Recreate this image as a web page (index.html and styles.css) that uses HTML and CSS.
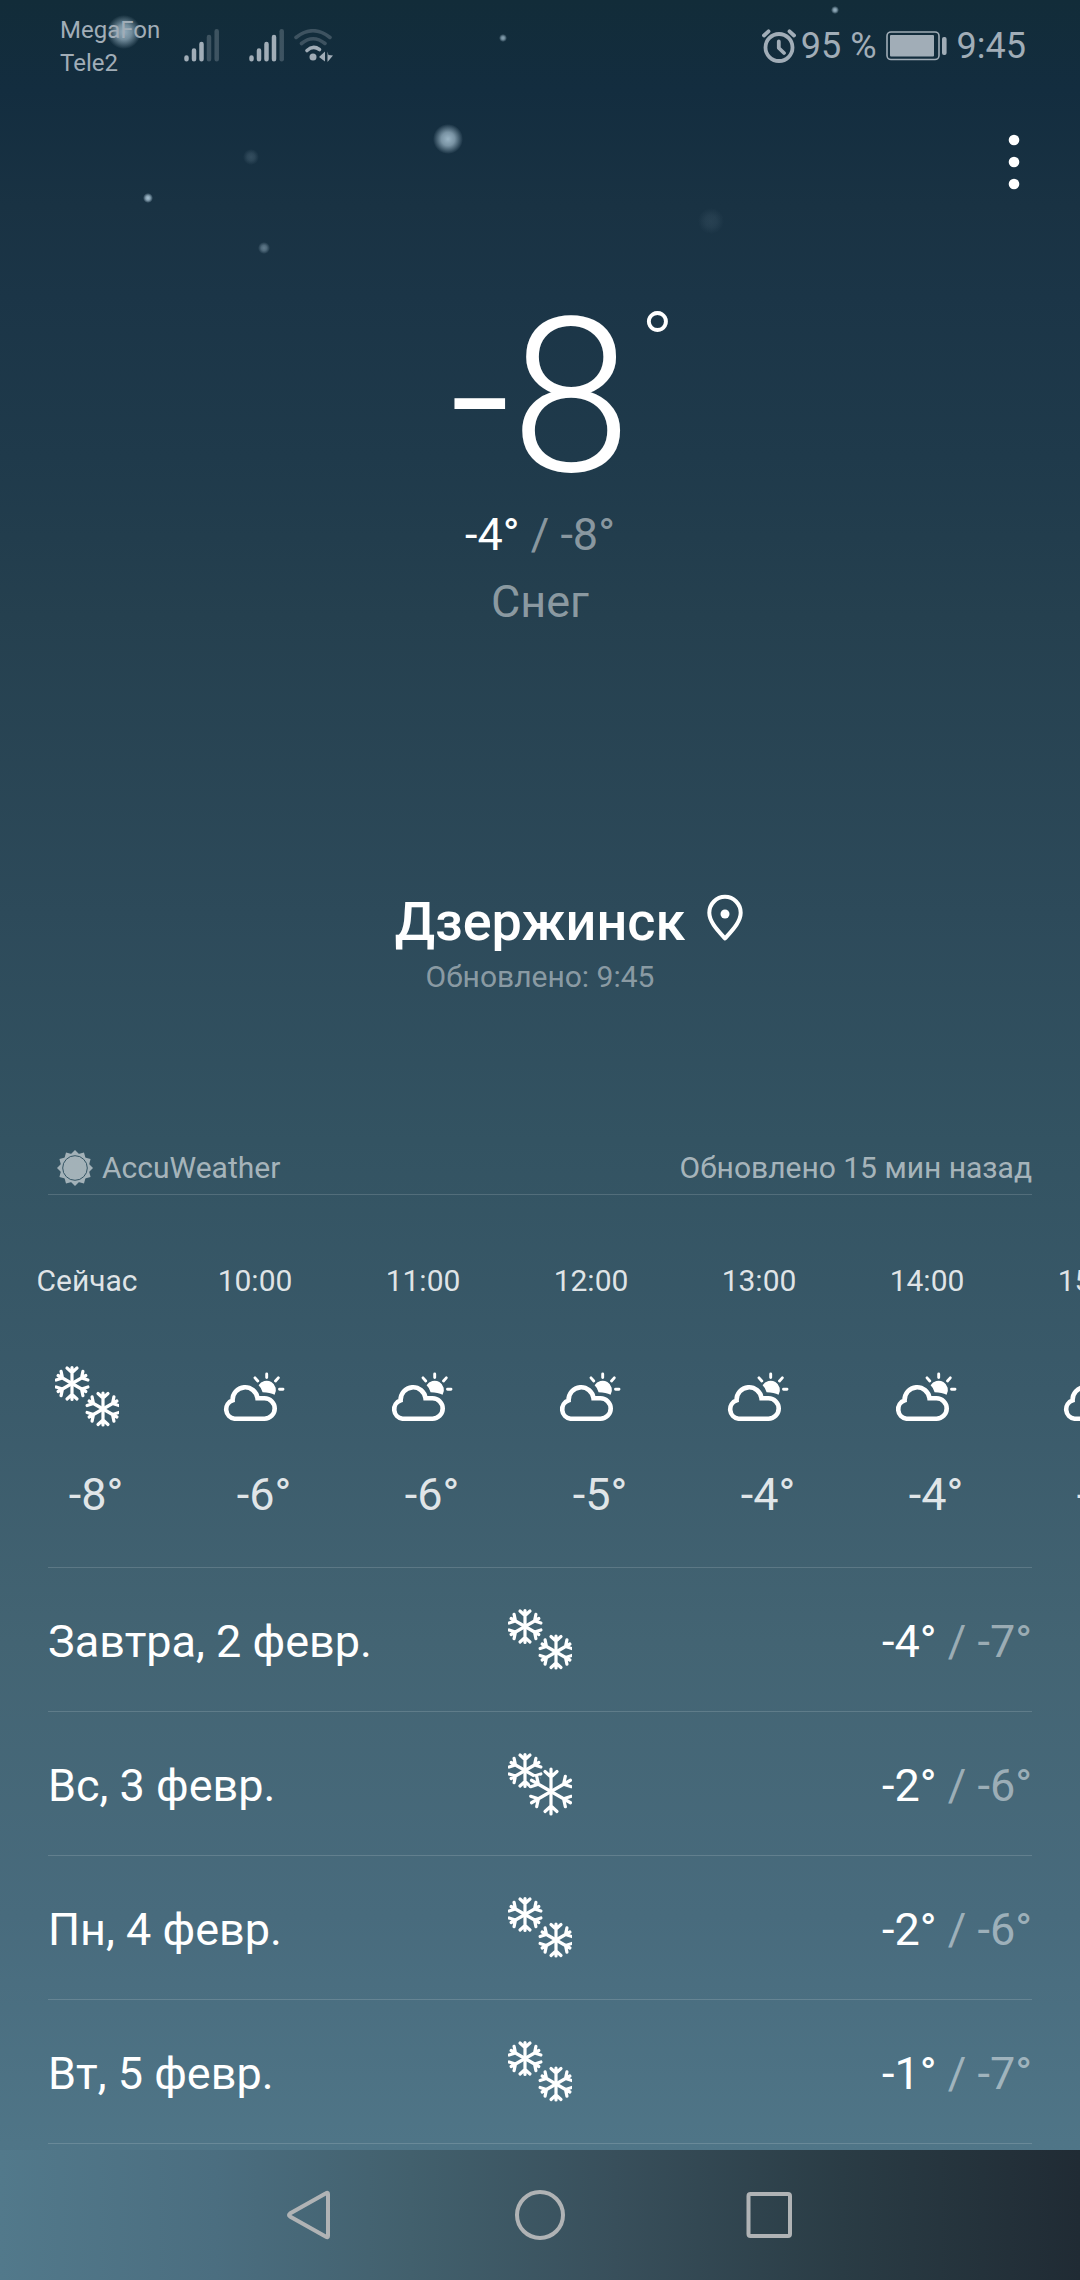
FILE: index.html
```html
<!DOCTYPE html>
<html lang="ru">
<head>
<meta charset="utf-8">
<meta name="viewport" content="width=device-width, initial-scale=1">
<title>Погода</title>
<link rel="stylesheet" href="styles.css">
</head>
<body>
<svg class="defs" width="0" height="0" aria-hidden="true">
  <defs>
    <radialGradient id="glow">
      <stop offset="0" stop-color="#a9c3d3"/>
      <stop offset="0.45" stop-color="#a9c3d3" stop-opacity="0.75"/>
      <stop offset="1" stop-color="#a9c3d3" stop-opacity="0"/>
    </radialGradient>
    <g id="arm"><path d="M0 0V-16M-5 -15.500L0 -11L5 -15.500"/></g>
    <g id="flake">
      <use href="#arm"/><use href="#arm" transform="rotate(60)"/><use href="#arm" transform="rotate(120)"/>
      <use href="#arm" transform="rotate(180)"/><use href="#arm" transform="rotate(240)"/><use href="#arm" transform="rotate(300)"/>
    </g>
    <g id="arm-big"><path d="M0 0V-22.500M-6 -20L0 -14.500L6 -20"/></g>
    <g id="flake-big">
      <use href="#arm-big"/><use href="#arm-big" transform="rotate(60)"/><use href="#arm-big" transform="rotate(120)"/>
      <use href="#arm-big" transform="rotate(180)"/><use href="#arm-big" transform="rotate(240)"/><use href="#arm-big" transform="rotate(300)"/>
    </g>
    <mask id="behind" maskUnits="userSpaceOnUse" x="0" y="0" width="64" height="64">
      <rect width="64" height="64" fill="#fff"/>
      <use href="#flake-big" transform="translate(43 39.500)" stroke="#000" stroke-width="7"/>
    </mask>
    <symbol id="snow" viewBox="0 0 64 64">
      <g fill="none" stroke="#fff" stroke-width="3.200" stroke-linecap="round">
        <use href="#flake" transform="translate(17 18.500)"/>
        <use href="#flake" transform="translate(48 44)"/>
      </g>
    </symbol>
    <symbol id="heavy-snow" viewBox="0 0 64 64">
      <g fill="none" stroke-linecap="round">
        <g mask="url(#behind)"><use href="#flake" transform="translate(17 18.500)" stroke="#fff" stroke-width="3.200"/></g>
        <use href="#flake-big" transform="translate(43 39.500)" stroke="#fff" stroke-width="3.200"/>
      </g>
    </symbol>
    <symbol id="partly" viewBox="0 0 64 64">
      <path d="M11.500 53.700H41.500A10.200 10.200 0 0 0 41.500 33.300H34.500A12.500 12.500 0 0 0 9.600 35.300A9.500 9.500 0 0 0 11.500 53.700Z" fill="none" stroke="#fff" stroke-width="4.600"/>
      <path d="M35.600 20.200A9 9 0 1 1 51.600 29.800Q47 27.500 39.600 27.200Q38.600 23 35.600 20.200Z" fill="#fff"/>
      <path d="M43.700 9V12.500M56.500 24.300H60M52.500 16L55.300 12.900M34.800 16L32 12.900" fill="none" stroke="#fff" stroke-width="2.900" stroke-linecap="round"/>
    </symbol>
  </defs>
</svg>

<svg class="snowfall" aria-hidden="true">
  <g fill="url(#glow)">
    <circle cx="124" cy="32" r="17" opacity="0.85"/>
    <circle cx="448" cy="139" r="15" opacity="0.9"/>
    <circle cx="251" cy="157" r="8" opacity="0.2"/>
    <circle cx="148" cy="198" r="5"/>
    <circle cx="264" cy="248" r="6" opacity="0.5"/>
    <circle cx="503" cy="38" r="4" opacity="0.8"/>
    <circle cx="835" cy="10" r="4" opacity="0.9"/>
    <circle cx="711" cy="221" r="13" opacity="0.1"/>
  </g>
</svg>

<header class="status">
  <div class="carriers"><span>MegaFon</span><span>Tele2</span></div>
  <svg class="signal" width="36" height="34" viewBox="0 0 36 34" aria-hidden="true">
    <g stroke="currentColor" stroke-width="4.500" stroke-linecap="round">
      <path d="M2.500 28.500V30.200M10 21.500V30.200M17.500 15V30.200"/>
      <path d="M25 8V30.200M32.700 2.300V30.200" opacity="0.3"/>
    </g>
  </svg>
  <svg class="signal signal-second" width="36" height="34" viewBox="0 0 36 34" aria-hidden="true">
    <g stroke="currentColor" stroke-width="4.500" stroke-linecap="round">
      <path d="M2.500 28.500V30.200M10 21.500V30.200M17.500 15V30.200M25 8V30.200"/>
      <path d="M32.700 2.300V30.200" opacity="0.3"/>
    </g>
  </svg>
  <svg class="wifi" width="40" height="34" viewBox="0 0 40 34" aria-hidden="true">
    <g fill="none" stroke="currentColor" stroke-width="3.600" stroke-linecap="round">
      <path d="M2 8.500Q19 -5 36 8.500M7.500 14.500Q19 5 31 14.500" opacity="0.3"/>
      <path d="M13 21.500Q19 16 25.500 20.500"/>
    </g>
    <circle cx="19" cy="28" r="3.500" fill="currentColor"/>
    <path d="M31 22.500V32.500L25 28ZM33.500 22.500L34.500 26L39 26.500L33.500 33Z" fill="currentColor"/>
  </svg>
  <div class="spacer"></div>
  <svg class="alarm" width="34" height="34" viewBox="0 0 34 34" aria-hidden="true">
    <g fill="none" stroke="currentColor" stroke-width="3.800" stroke-linecap="round" stroke-linejoin="round">
      <circle cx="17" cy="18.500" r="13.500"/>
      <path d="M16.800 12.500V19L22 24M2 6.500L6.500 2.300M32 6.500L27.500 2.300"/>
    </g>
  </svg>
  <span class="battery-level">95 %</span>
  <svg class="battery" width="62" height="30" viewBox="0 0 62 30" aria-hidden="true">
    <rect x="1" y="1" width="52" height="27.500" rx="4" fill="none" stroke="currentColor" stroke-width="1.600"/>
    <rect x="4" y="4" width="44" height="21.500" rx="1" fill="currentColor"/>
    <rect x="56" y="6" width="4.600" height="18" rx="2" fill="currentColor"/>
  </svg>
  <time class="clock">9:45</time>
</header>

<main class="weather">
  <div class="toolbar">
    <button class="more" type="button" aria-label="Ещё">
      <svg width="12" height="56" viewBox="0 0 12 56"><g fill="#fff"><circle cx="6" cy="6" r="5.300"/><circle cx="6" cy="28" r="5.300"/><circle cx="6" cy="50" r="5.300"/></g></svg>
    </button>
  </div>

  <section class="current">
    <div class="side-mark now"><span class="now-value">-8</span><span class="now-degree">°</span></div>
    <p class="range">-4°<span class="low"> / -8°</span></p>
    <p class="condition">Снег</p>
  </section>

  <section class="place">
    <div class="side-mark">
      <h1 class="city">Дзержинск</h1>
      <svg class="pin" width="38" height="48" viewBox="0 0 38 48" aria-hidden="true">
        <path d="M19 44.500C12 36.500 3.300 28 3.300 18.800A15.700 16 0 0 1 34.700 18.800C34.700 28 26 36.500 19 44.500Z" fill="none" stroke="#fff" stroke-width="4" stroke-linejoin="round"/>
        <circle cx="19" cy="20" r="4.500" fill="#fff"/>
      </svg>
    </div>
    <p class="updated">Обновлено: 9:45</p>
  </section>

  <div class="source">
    <a class="provider" href="#">
      <svg width="36" height="36" viewBox="-18 -18 36 36" aria-hidden="true">
        <defs><mask id="ring"><rect x="-18" y="-18" width="36" height="36" fill="#fff"/><circle r="12.300" fill="none" stroke="#000"/></mask></defs>
        <g class="sun" mask="url(#ring)">
          <path d="M0 -18L18 0L0 18L-18 0Z"/>
          <path d="M0 -18L18 0L0 18L-18 0Z" transform="rotate(30)"/>
          <path d="M0 -18L18 0L0 18L-18 0Z" transform="rotate(60)"/>
        </g>
      </svg>
      AccuWeather
    </a>
    <span>Обновлено 15 мин назад</span>
  </div>

  <ol class="hours">
    <li><span>Сейчас</span><svg class="icon"><use href="#snow"/></svg><span class="deg">-8°</span></li>
    <li><span>10:00</span><svg class="icon"><use href="#partly"/></svg><span class="deg">-6°</span></li>
    <li><span>11:00</span><svg class="icon"><use href="#partly"/></svg><span class="deg">-6°</span></li>
    <li><span>12:00</span><svg class="icon"><use href="#partly"/></svg><span class="deg">-5°</span></li>
    <li><span>13:00</span><svg class="icon"><use href="#partly"/></svg><span class="deg">-4°</span></li>
    <li><span>14:00</span><svg class="icon"><use href="#partly"/></svg><span class="deg">-4°</span></li>
    <li><span>15:00</span><svg class="icon"><use href="#partly"/></svg><span class="deg">-4°</span></li>
  </ol>

  <ul class="days">
    <li><span>Завтра, 2 февр.</span><svg class="icon"><use href="#snow"/></svg><span class="temps">-4°<span class="low"> / -7°</span></span></li>
    <li><span>Вс, 3 февр.</span><svg class="icon"><use href="#heavy-snow"/></svg><span class="temps">-2°<span class="low"> / -6°</span></span></li>
    <li><span>Пн, 4 февр.</span><svg class="icon"><use href="#snow"/></svg><span class="temps">-2°<span class="low"> / -6°</span></span></li>
    <li><span>Вт, 5 февр.</span><svg class="icon"><use href="#snow"/></svg><span class="temps">-1°<span class="low"> / -7°</span></span></li>
  </ul>
</main>

<nav class="navbar">
  <button type="button" aria-label="Назад"><svg width="52" height="52" viewBox="0 0 52 52"><path d="M44 5V47Q44 49 42 47.800L6 27.500Q4 26 6 24.500L42 4.200Q44 3 44 5Z"/></svg></button>
  <button type="button" aria-label="Домой"><svg width="52" height="52" viewBox="0 0 52 52"><circle cx="26" cy="26" r="23"/></svg></button>
  <button type="button" aria-label="Недавние"><svg width="52" height="52" viewBox="0 0 52 52"><rect x="4.500" y="5" width="41.500" height="42" rx="2"/></svg></button>
</nav>
</body>
</html>
```
FILE: styles.css
```css
* { box-sizing: border-box; }

body {
  position: relative;
  display: flex;
  flex-direction: column;
  height: 100vh;
  margin: 0;
  overflow: hidden;
  font-family: Roboto, "Noto Sans", sans-serif;
  font-size: 45px;
  line-height: 54px;
  color: #fff;
  background: linear-gradient(#122c39 0%, #132d3f 4%, #193243 9%, #1b3547 13%, #1f3a4b 20%, #25404f 27%, #2d4a5a 40%, #335362 50%, #3a5a6a 61%, #436473 72%, #486b7d 84%, #4f7587 94%, #52788b 100%);
}

p, h1, ol, ul { margin: 0; padding: 0; }
ol, ul { list-style: none; }
button { padding: 0; border: 0; background: none; }
svg { display: block; flex: none; }

.defs { position: absolute; }
.snowfall { position: absolute; top: 0; left: 0; width: 100%; height: 280px; }

.status {
  position: relative;
  display: flex;
  align-items: center;
  flex: none;
  height: 92px;
  padding: 0 54px 0 60px;
  font-size: 36px;
  line-height: 42px;
  color: #a1adb7;
}
.carriers { display: flex; flex-direction: column; padding-top: 2px; font-size: 24px; line-height: 33px; }
.signal { margin-left: 24px; }
.signal-second { margin-left: 29px; }
.wifi { margin-left: 9px; }
.spacer { flex: 1; }
.battery-level { margin-left: 5px; }
.battery { margin-left: 9px; }
.clock { margin-left: 9px; }

.weather { position: relative; flex: 1; min-height: 0; overflow: hidden; }

.toolbar { display: flex; align-items: center; justify-content: flex-end; height: 140px; padding-right: 18px; }
.more { display: grid; place-items: center; width: 96px; height: 96px; }

.current { padding-top: 58px; text-align: center; }
.side-mark { display: grid; grid-template-columns: 1fr auto 1fr; }
.side-mark > :first-child { grid-column: 2; }
.now { font-weight: 300; font-size: 216px; line-height: 216px; }
.now-degree { padding-left: 10px; font-size: 88px; line-height: 108px; text-align: left; }
.range { margin-top: 2px; }
.low { color: rgba(255, 255, 255, 0.48); }
.condition { margin-top: 13px; color: rgba(255, 255, 255, 0.48); }

.place { padding-top: 261px; text-align: center; }
.city { font-size: 54px; font-weight: 500; line-height: 64px; }
.pin { margin: 4px 0 0 21px; }
.updated { margin-top: 5px; font-size: 30px; line-height: 36px; color: rgba(255, 255, 255, 0.45); }

.source {
  display: flex;
  justify-content: space-between;
  margin: 155px 48px 0;
  padding-bottom: 8px;
  border-bottom: 1px solid rgba(255, 255, 255, 0.15);
  font-size: 30px;
  line-height: 36px;
  color: rgba(255, 255, 255, 0.58);
}
.provider { display: flex; gap: 9px; padding-left: 9px; color: inherit; text-decoration: none; }
.sun { fill: #fff; opacity: 0.55; }

.icon { width: 64px; height: 64px; }

.hours { display: flex; padding: 68px 0 45px 3px; overflow: hidden; font-size: 30px; line-height: 36px; color: rgba(255, 255, 255, 0.85); }
.hours li { display: flex; flex: none; flex-direction: column; align-items: center; width: 168px; }
.hours .icon { margin: 66px 0 39px; }
.deg { padding-left: 18px; font-size: 45px; line-height: 54px; }

.days { margin: 0 48px; border-top: 1px solid rgba(255, 255, 255, 0.15); }
.days li {
  display: grid;
  grid-template-columns: 1fr auto 1fr;
  align-items: center;
  height: 144px;
  border-bottom: 1px solid rgba(255, 255, 255, 0.15);
}
.days li > span { padding-top: 4px; }
.temps { text-align: right; }

.navbar {
  position: relative;
  display: flex;
  align-items: center;
  justify-content: center;
  gap: 178px;
  flex: none;
  height: 130px;
  background: linear-gradient(90deg, #52798b 0%, #4b6e80 20%, #42606d 38%, #384f5b 57%, #2a3c45 78%, #202b34 100%);
}
.navbar svg { fill: none; stroke: #b0b3b5; stroke-width: 4; }
```
